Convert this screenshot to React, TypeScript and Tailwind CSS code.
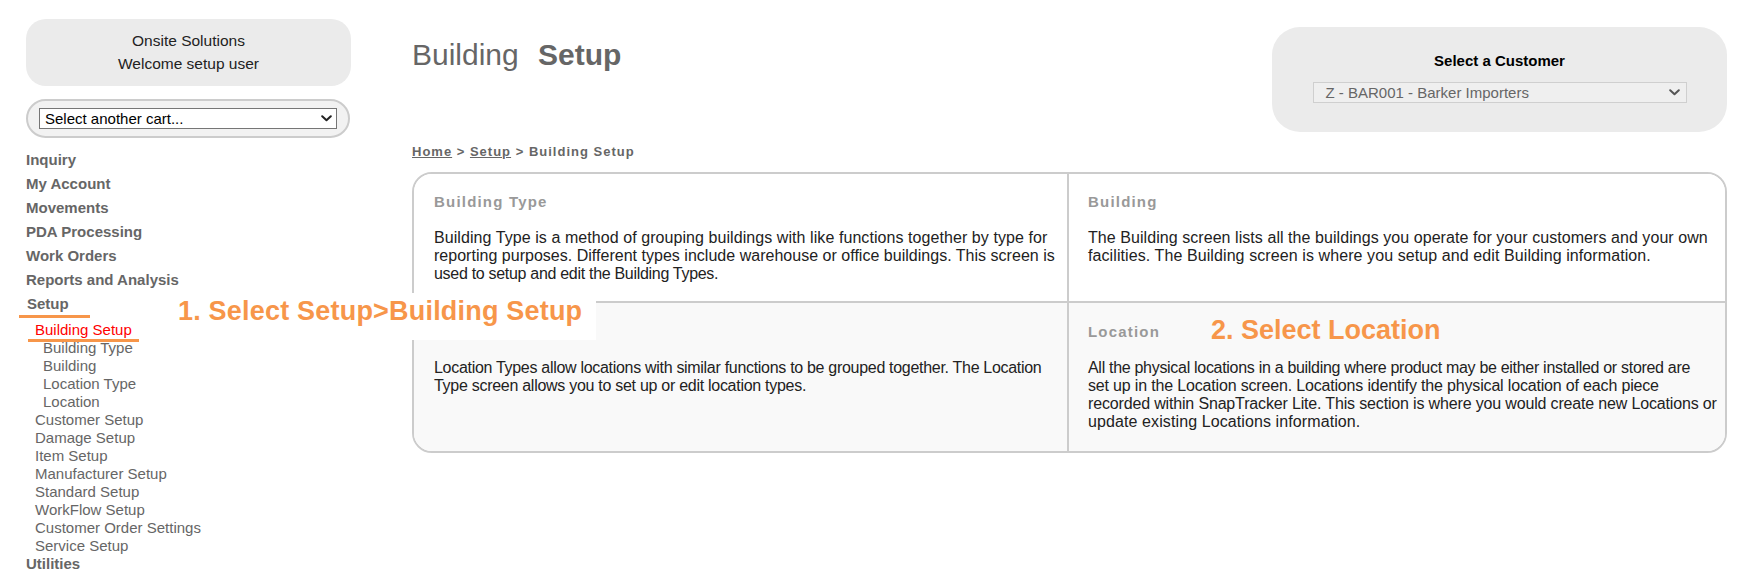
import React from "react";

const Chevron = ({ color, className }: { color: string; className: string }) => (
  <svg className={className} width="11" height="7" viewBox="0 0 11 7" fill="none">
    <polyline points="1.2,1.2 5.5,5.3 9.8,1.2" stroke={color} strokeWidth="2" strokeLinecap="round" strokeLinejoin="round" />
  </svg>
);

const mainItems = ["Inquiry", "My Account", "Movements", "PDA Processing", "Work Orders", "Reports and Analysis"];
const buildingSub = ["Building Type", "Building", "Location Type", "Location"];
const setupSub = [
  "Customer Setup",
  "Damage Setup",
  "Item Setup",
  "Manufacturer Setup",
  "Standard Setup",
  "WorkFlow Setup",
  "Customer Order Settings",
  "Service Setup",
];

type Line = { t: string; c: string };

function Lines({ lines }: { lines: Line[] }) {
  return (
    <div className="mt-[18px] text-[16px] leading-[18px] text-[#222]">
      {lines.map((l) => (
        <span key={l.t} className={"block whitespace-nowrap " + l.c}>
          {l.t}
        </span>
      ))}
    </div>
  );
}

function Heading({ children }: { children: React.ReactNode }) {
  return <div className="h-[18px] text-[15px] font-bold leading-[18px] tracking-[1.2px] text-[#999]">{children}</div>;
}

export default function App() {
  return (
    <div className="relative min-h-[576px] bg-white font-['Liberation_Sans',Arial,sans-serif] text-[#666]">
      <div className="flex pl-[26px] pr-[26px] pt-[19px]">
        <aside className="w-[325px] shrink-0">
          <div className="h-[67px] rounded-[20px] bg-[#ebebeb] pt-[10px] text-center text-[15.5px] leading-[23px] text-[#222]">
            <div>Onsite Solutions</div>
            <div>Welcome setup user</div>
          </div>
          <div className="mt-[13px] flex h-[39px] w-[324px] items-center rounded-full border-2 border-[#cccccc] bg-[#f2f2f2] pl-[11px]">
            <div className="relative flex h-[21px] w-[298px] items-center border border-[#767676] bg-white pl-[5px] text-[15px] leading-[19px] text-black">
              Select another cart...
              <Chevron color="#222" className="absolute right-[4px] top-[6px]" />
            </div>
          </div>
          <nav className="mt-[10px]">
            {mainItems.map((m) => (
              <div key={m} className="flex h-[24px] items-center text-[15px] font-bold">
                {m}
              </div>
            ))}
            <div className="flex h-[24px] items-center pl-[1px] text-[15px] font-bold">Setup</div>
            <div className="mt-[5px] pl-[9px] text-[15px] leading-[18px]">
              <div className="text-[#ff0000]">Building Setup</div>
              {buildingSub.map((s) => (
                <div key={s} className="pl-[8px]">
                  {s}
                </div>
              ))}
              {setupSub.map((s) => (
                <div key={s}>{s}</div>
              ))}
            </div>
            <div className="text-[15px] font-bold leading-[17px]">Utilities</div>
          </nav>
        </aside>

        <main className="ml-[61px] min-w-0 flex-1">
          <div className="flex items-start justify-between">
            <h1 className="mt-[19px] text-[30px] leading-[34px] text-[#666]">
              Building <span className="ml-[11px] font-bold">Setup</span>
            </h1>
            <div className="mt-[8px] flex h-[105px] w-[455px] flex-col items-center rounded-[28px] bg-[#ebebeb] pt-[25px]">
              <div className="text-[15px] font-bold leading-[18px] text-black">Select a Customer</div>
              <div className="relative mt-[12px] flex h-[21px] w-[374px] items-center border border-[#cfcfcf] bg-[#efefef] pl-[12px] text-[15px] leading-[19px] text-[#666]">
                Z - BAR001 - Barker Importers
                <Chevron color="#555" className="absolute right-[6px] top-[6px]" />
              </div>
            </div>
          </div>

          <div className="mt-[12px] text-[13px] font-bold leading-[16px] tracking-[1px] text-[#666]">
            <span className="underline">Home</span> &gt; <span className="underline">Setup</span> &gt; Building Setup
          </div>

          <div className="mt-[12px] grid grid-cols-[655px_1fr] overflow-hidden rounded-[20px] border-2 border-[#cccccc]">
            <div className="h-[129px] border-b-2 border-r-2 border-[#cccccc] bg-white pl-[20px] pt-[19px]">
              <Heading>Building Type</Heading>
              <Lines
                lines={[
                  { t: "Building Type is a method of grouping buildings with like functions together by type for", c: "tracking-[0.07px]" },
                  { t: "reporting purposes. Different types include warehouse or office buildings. This screen is", c: "tracking-[0.02px]" },
                  { t: "used to setup and edit the Building Types.", c: "tracking-[-0.3px]" },
                ]}
              />
            </div>
            <div className="h-[129px] border-b-2 border-[#cccccc] bg-white pl-[19px] pt-[19px]">
              <Heading>Building</Heading>
              <Lines
                lines={[
                  { t: "The Building screen lists all the buildings you operate for your customers and your own", c: "tracking-[0.06px]" },
                  { t: "facilities. The Building screen is where you setup and edit Building information.", c: "tracking-[0.09px]" },
                ]}
              />
            </div>
            <div className="h-[148px] border-r-2 border-[#cccccc] bg-[#f9f9f9] pl-[20px] pt-[20px]">
              <Heading>Location Type</Heading>
              <Lines
                lines={[
                  { t: "Location Types allow locations with similar functions to be grouped together. The Location", c: "tracking-[-0.3px]" },
                  { t: "Type screen allows you to set up or edit location types.", c: "tracking-[-0.28px]" },
                ]}
              />
            </div>
            <div className="relative h-[148px] bg-[#f9f9f9] pl-[19px] pt-[20px]">
              <Heading>Location</Heading>
              <Lines
                lines={[
                  { t: "All the physical locations in a building where product may be either installed or stored are", c: "tracking-[-0.3px]" },
                  { t: "set up in the Location screen. Locations identify the physical location of each piece", c: "tracking-[-0.17px]" },
                  { t: "recorded within SnapTracker Lite. This section is where you would create new Locations or", c: "tracking-[-0.16px]" },
                  { t: "update existing Locations information.", c: "tracking-[0.1px]" },
                ]}
              />
              <div className="absolute left-[142px] top-[12px] whitespace-nowrap text-[27px] font-bold leading-[31px] text-[#f7964a]">
                2. Select Location
              </div>
            </div>
          </div>
        </main>
      </div>

      {/* annotations */}
      <div className="absolute left-[19px] top-[315px] h-[3px] w-[71px] bg-[#f7964a]" />
      <div className="absolute left-[28px] top-[339px] h-[3px] w-[111px] bg-[#f7964a]" />
      <div className="absolute left-[160px] top-[293px] h-[47px] w-[436px] whitespace-nowrap bg-white pl-[18px] pt-[3px] text-[27px] font-bold leading-[31px] tracking-[0.2px] text-[#f7964a]">
        1. Select Setup&gt;Building Setup
      </div>
    </div>
  );
}
